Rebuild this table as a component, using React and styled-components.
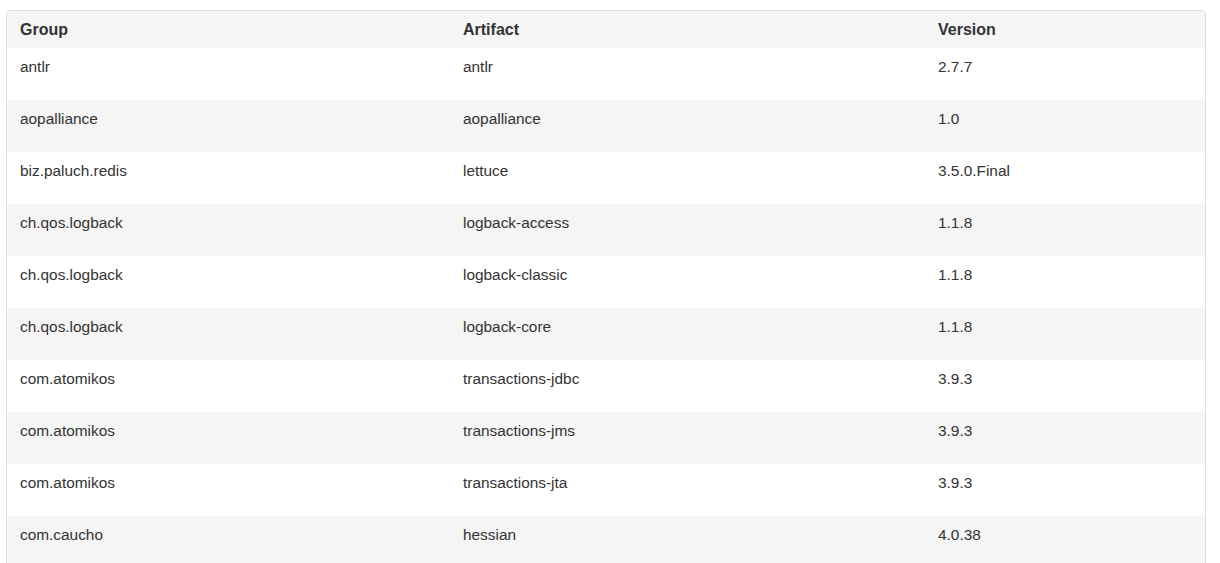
import React from "react";
import styled, { createGlobalStyle } from "styled-components";

const rows = [
  ["antlr", "antlr", "2.7.7"],
  ["aopalliance", "aopalliance", "1.0"],
  ["biz.paluch.redis", "lettuce", "3.5.0.Final"],
  ["ch.qos.logback", "logback-access", "1.1.8"],
  ["ch.qos.logback", "logback-classic", "1.1.8"],
  ["ch.qos.logback", "logback-core", "1.1.8"],
  ["com.atomikos", "transactions-jdbc", "3.9.3"],
  ["com.atomikos", "transactions-jms", "3.9.3"],
  ["com.atomikos", "transactions-jta", "3.9.3"],
  ["com.caucho", "hessian", "4.0.38"],
];

const GlobalStyle = createGlobalStyle`
  body {
    margin: 0;
    padding: 10px 14px 0 6px;
    background: #fff;
    font-family: "Liberation Sans", Arial, sans-serif;
    font-size: 15.4px;
    color: #333;
  }
`;

const Panel = styled.div`
  border: 1px solid #dddddd;
  border-radius: 4px;
  overflow: hidden;
`;

const Table = styled.table`
  width: 100%;
  border-collapse: collapse;
  table-layout: fixed;
`;

const HeadCell = styled.th`
  text-align: left;
  font-weight: bold;
  font-size: 16px;
  background: #f5f5f5;
  padding: 9px 13px 8px;
  line-height: 20px;
  width: ${(p) => p.w};
`;

const Row = styled.tr`
  background: ${(p) => (p.striped ? "#f5f5f5" : "#ffffff")};
`;

const Cell = styled.td`
  padding: 8px 13px 22px;
  line-height: 22px;
  vertical-align: top;
`;

export default function App() {
  return (
    <>
      <GlobalStyle />
      <Panel>
        <Table>
          <thead>
            <tr>
              <HeadCell w="417px">Group</HeadCell>
              <HeadCell w="449px">Artifact</HeadCell>
              <HeadCell>Version</HeadCell>
            </tr>
          </thead>
          <tbody>
            {rows.map((r, i) => (
              <Row key={i} striped={i % 2 === 1}>
                <Cell>{r[0]}</Cell>
                <Cell>{r[1]}</Cell>
                <Cell>{r[2]}</Cell>
              </Row>
            ))}
          </tbody>
        </Table>
      </Panel>
    </>
  );
}
